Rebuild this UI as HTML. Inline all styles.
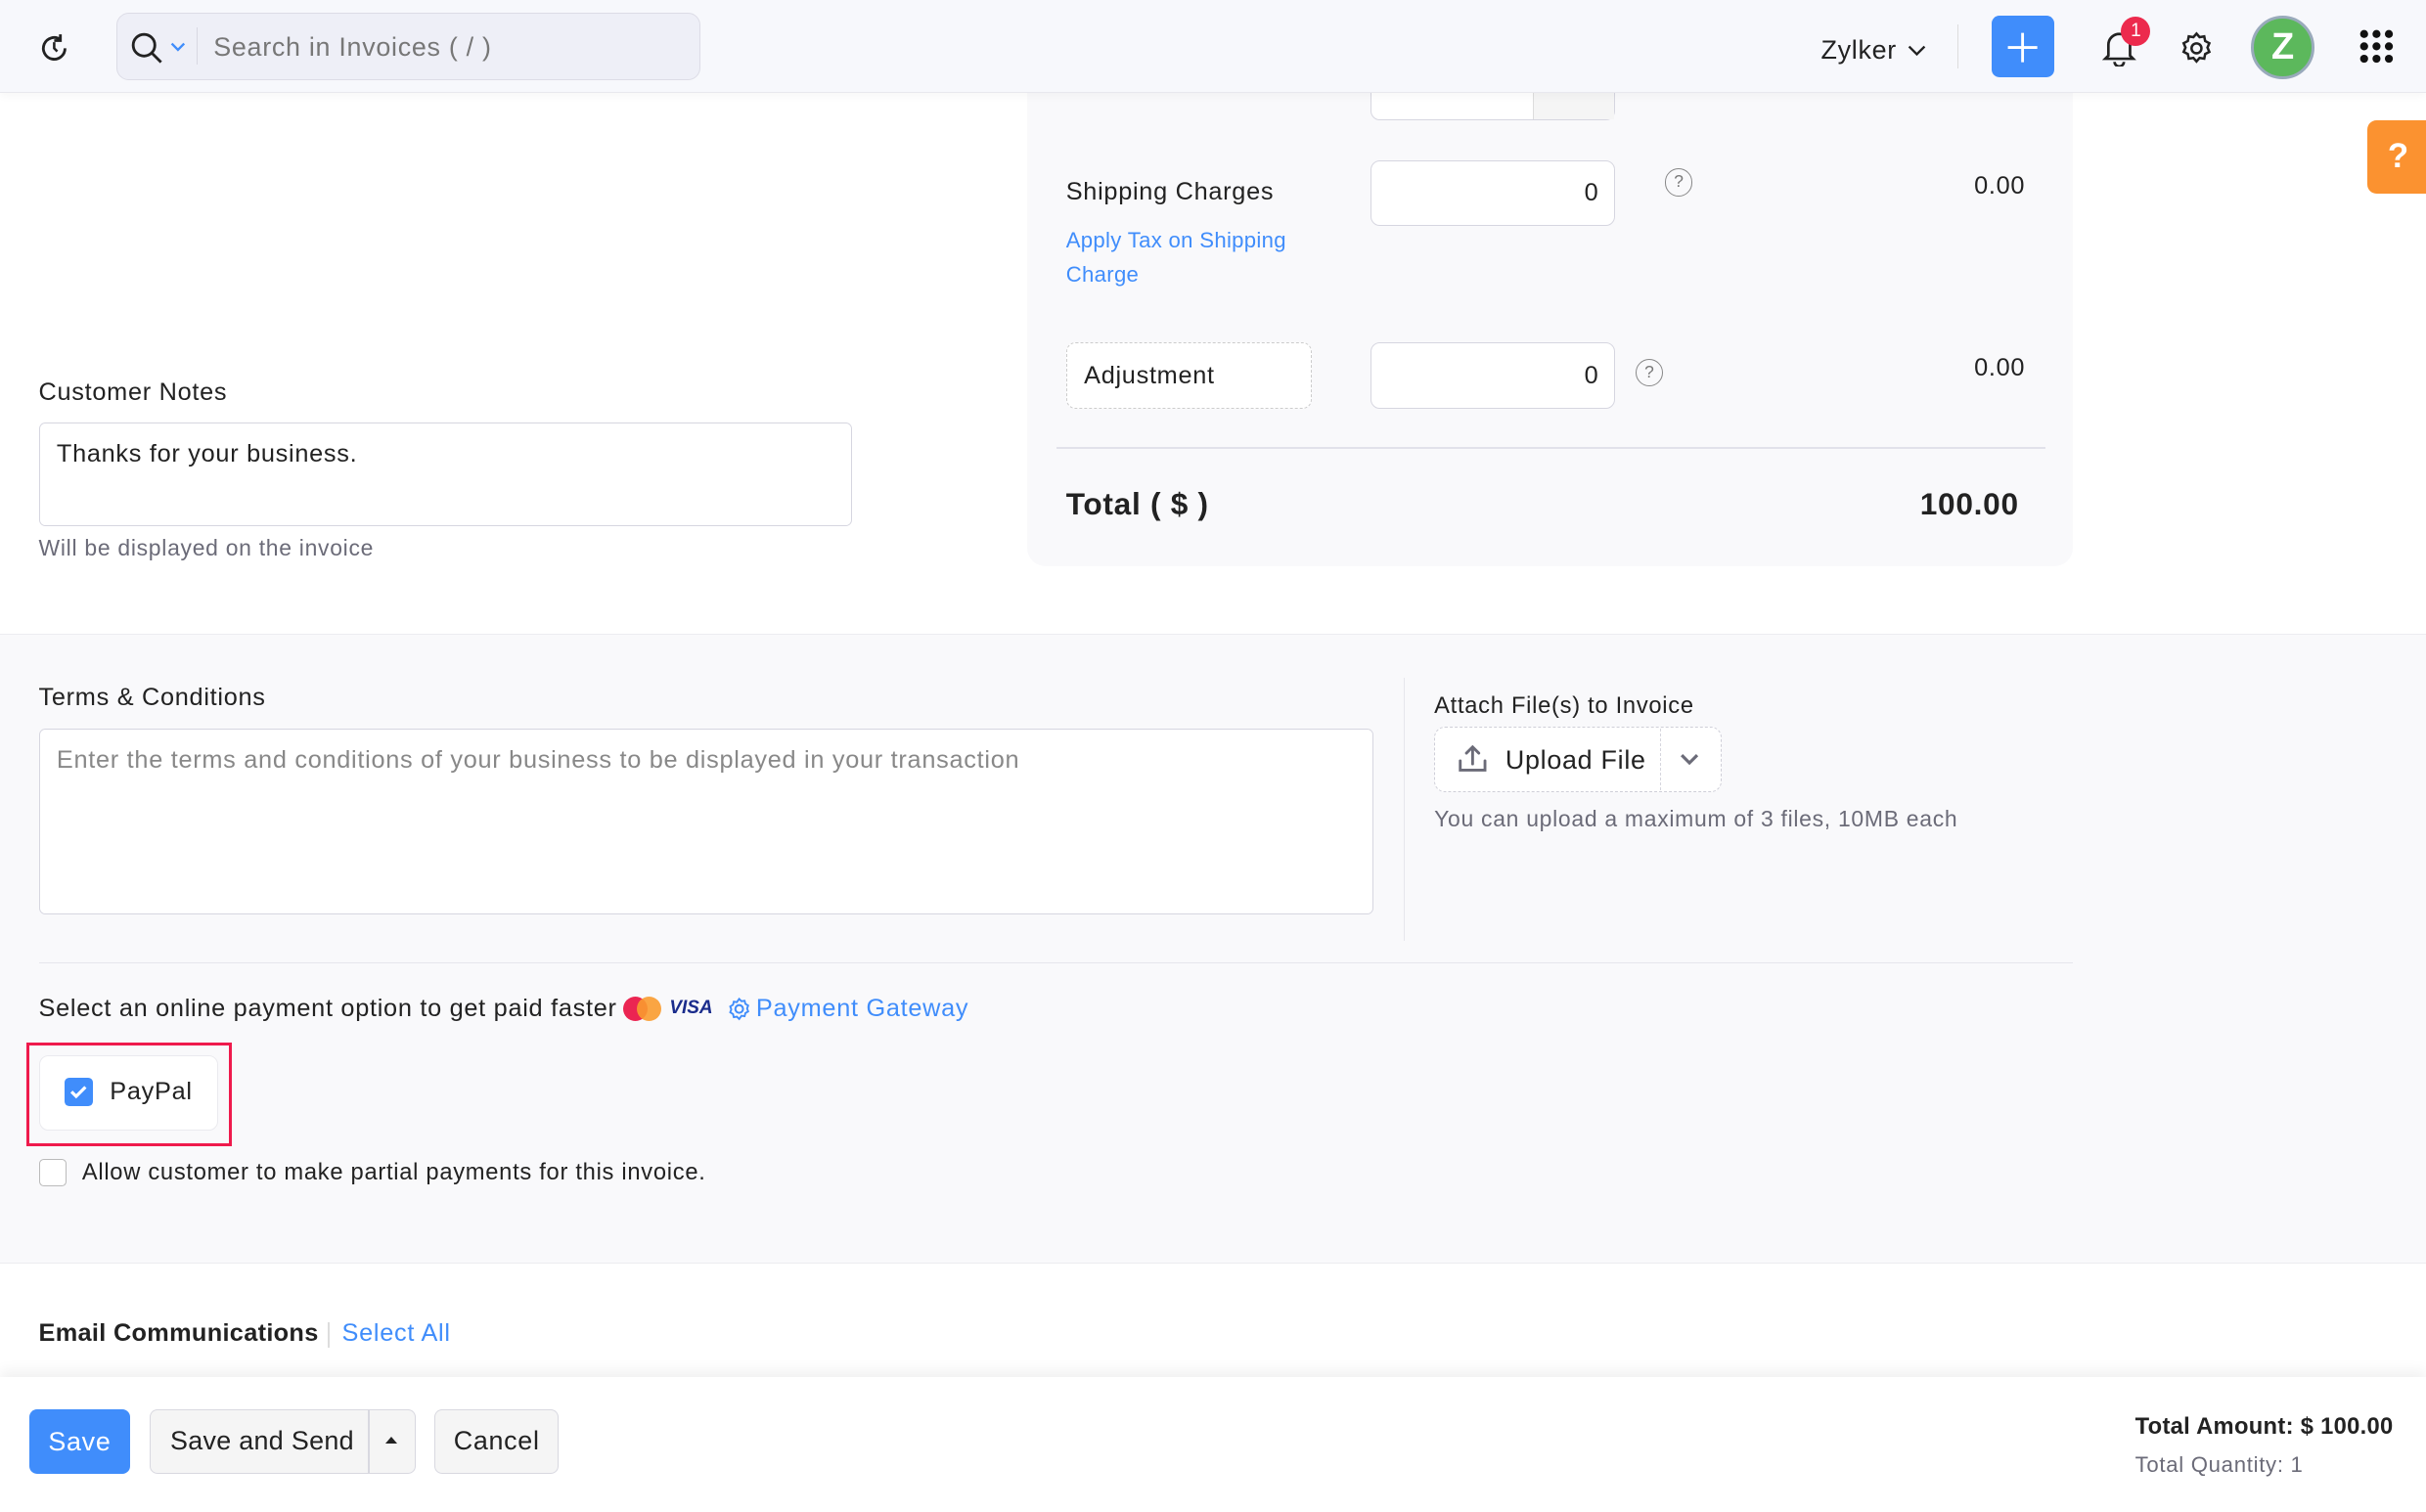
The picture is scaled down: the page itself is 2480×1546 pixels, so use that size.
<!DOCTYPE html>
<html><head><meta charset="utf-8"><style>
*{box-sizing:border-box;margin:0;padding:0}
html,body{width:2480px;height:1546px;overflow:hidden;background:#fff}
#r{zoom:1.5816;width:1568px;height:977px;position:relative;font-family:"Liberation Sans",sans-serif;color:#222;font-size:16px;background:#fff;overflow:hidden;letter-spacing:0.45px}
.a{position:absolute;white-space:nowrap}
.inp{position:absolute;background:#fff;border:1px solid #d6d6e0;border-radius:6px}
.blue{color:#408dfb}
.gray{color:#6b6b78}
</style></head><body><div id="r">
<div class="a" style="left:664px;top:60px;width:676px;height:306px;background:#f9f9fb;border-radius:0 0 12px 12px"></div>
<div class="inp" style="left:886px;top:40px;width:158px;height:38px;border-radius:0 0 6px 6px"></div>
<div class="a" style="left:991px;top:41px;width:52px;height:36px;background:#f5f5f5;border-left:1px solid #ddd"></div>
<div class="a" style="left:689px;top:115px">Shipping Charges</div>
<div class="a blue" style="left:689px;top:145px;font-size:14px;line-height:22px;letter-spacing:0.2px">Apply Tax on Shipping<br>Charge</div>
<div class="inp" style="left:886px;top:104px;width:158px;height:42px;text-align:right;padding:11px 10px">0</div>
<div class="a" style="left:1076px;top:109px;width:18px;height:18px;border:1px solid #888;border-radius:50%;font-size:11px;text-align:center;line-height:16px;color:#777;letter-spacing:0">?</div>
<div class="a" style="left:1276px;top:111px">0.00</div>
<div class="a" style="left:689px;top:221px;width:159px;height:43px;border:1px dashed #ccc;border-radius:6px;background:#fff;padding:12px 11px">Adjustment</div>
<div class="inp" style="left:886px;top:221px;width:158px;height:43px;text-align:right;padding:12px 10px">0</div>
<div class="a" style="left:1057px;top:232px;width:18px;height:18px;border:1px solid #888;border-radius:50%;font-size:11px;text-align:center;line-height:16px;color:#777;letter-spacing:0">?</div>
<div class="a" style="left:1276px;top:229px">0.00</div>
<div class="a" style="left:683px;top:289px;width:639px;height:1px;background:#e2e2ea"></div>
<div class="a" style="left:689px;top:314px;font-size:20px;font-weight:bold">Total ( $ )</div>
<div class="a" style="left:1241px;top:314px;font-size:20px;font-weight:bold">100.00</div>

<div class="a" style="left:25px;top:245px">Customer Notes</div>
<div class="inp" style="left:25px;top:273px;width:526px;height:67px;padding:11px 11px;border-radius:4px">Thanks for your business.</div>
<div class="a gray" style="left:25px;top:346px;font-size:14.5px">Will be displayed on the invoice</div>

<div class="a" style="left:0;top:410px;width:1568px;height:407px;background:#f9f9fb;border-top:1px solid #ececf0;border-bottom:1px solid #ececf0"></div>
<div class="a" style="left:25px;top:442px">Terms &amp; Conditions</div>
<div class="inp" style="left:25px;top:471px;width:863px;height:120px;padding:11px 11px;color:#888;border-radius:4px">Enter the terms and conditions of your business to be displayed in your transaction</div>
<div class="a" style="left:907px;top:438px;width:1px;height:170px;background:#e6e6ec"></div>
<div class="a" style="left:927px;top:448px;font-size:15px">Attach File(s) to Invoice</div>
<div class="a" style="left:927px;top:470px;width:186px;height:42px;border:1px dashed #cfcfd8;border-radius:7px;background:#fff"></div>
<div class="a" style="left:1073px;top:471px;width:1px;height:40px;border-left:1px dashed #d6d6de"></div>
<svg class="a" style="left:941px;top:480px" width="22" height="22" viewBox="0 0 22 22"><path d="M3 12v6h16v-6M11 3v11M7 7l4-4 4 4" fill="none" stroke="#6b6b78" stroke-width="1.8" stroke-linecap="round"/></svg>
<div class="a" style="left:973px;top:482px;font-size:17px">Upload File</div>
<svg class="a" style="left:1085px;top:486px" width="14" height="10" viewBox="0 0 14 10"><path d="M2 2l5 5 5-5" fill="none" stroke="#6b6b78" stroke-width="2"/></svg>
<div class="a gray" style="left:927px;top:521px;font-size:14.5px">You can upload a maximum of 3 files, 10MB each</div>
<div class="a" style="left:25px;top:622px;width:1315px;height:1px;background:#e6e6ec"></div>
<div class="a" style="left:25px;top:643px;display:flex;align-items:center">
<span>Select an online payment option to get paid faster</span>
<span style="position:relative;display:inline-block;width:26px;height:16px;margin-left:4px"><span style="position:absolute;left:0;top:0;width:16px;height:16px;border-radius:50%;background:#eb2552"></span><span style="position:absolute;left:9px;top:0;width:16px;height:16px;border-radius:50%;background:#f99b2f;opacity:.9"></span></span>
<span style="font-size:12px;font-weight:bold;font-style:italic;color:#1a2c8c;margin-left:4px;letter-spacing:0">VISA</span>
<svg style="margin-left:9px" width="16" height="16" viewBox="0 0 16 16"><circle cx="8" cy="8" r="2.5" fill="none" stroke="#408dfb" stroke-width="1.3"/><path d="M8 1.5l1.5 1.5 2-.3.5 2 1.8 1.1-.7 1.9.7 1.9-1.8 1.1-.5 2-2-.3L8 14.5 6.5 13l-2 .3-.5-2L2.2 10.2 2.9 8.3 2.2 6.4 4 5.3l.5-2 2 .3z" fill="none" stroke="#408dfb" stroke-width="1.2"/></svg>
<span class="blue" style="margin-left:3px">Payment Gateway</span>
</div>
<div class="a" style="left:17px;top:674px;width:133px;height:67px;border:2px solid #ef1a4c"></div>
<div class="a" style="left:25px;top:682px;width:116px;height:49px;background:#fff;border:1px solid #eaeaef;border-radius:6px"></div>
<div class="a" style="left:42px;top:697px;width:18px;height:18px;border-radius:3px;background:#408dfb"></div>
<svg class="a" style="left:42px;top:697px" width="18" height="18"><path d="M4.5 9l3 3 6-6" fill="none" stroke="#fff" stroke-width="2"/></svg>
<div class="a" style="left:71px;top:697px">PayPal</div>
<div class="a" style="left:25px;top:749px;width:18px;height:18px;border:1px solid #bbb;border-radius:3px;background:#fff"></div>
<div class="a" style="left:53px;top:750px;font-size:15px">Allow customer to make partial payments for this invoice.</div>

<div class="a" style="left:25px;top:853px;font-weight:bold;font-size:16px;letter-spacing:0.2px">Email Communications</div>
<div class="a" style="left:212px;top:855px;width:1px;height:16px;background:#ddd"></div>
<div class="a blue" style="left:221px;top:853px">Select All</div>

<div class="a" style="left:0;top:890px;width:1568px;height:87px;background:#fff;box-shadow:0 -4px 8px rgba(0,0,0,.06)"></div>
<div class="a" style="left:19px;top:911px;width:65px;height:42px;background:#408dfb;border-radius:5px;color:#fff;text-align:center;line-height:42px;font-size:17px">Save</div>
<div class="a" style="left:97px;top:911px;width:172px;height:42px;background:#f5f5f5;border:1px solid #d8d8e0;border-radius:5px"></div>
<div class="a" style="left:238px;top:912px;width:1px;height:40px;background:#d8d8e0"></div>
<div class="a" style="left:110px;top:922px;font-size:17px;letter-spacing:0.2px">Save and Send</div>
<div class="a" style="left:249px;top:929px;width:0;height:0;border-left:4px solid transparent;border-right:4px solid transparent;border-bottom:5px solid #222"></div>
<div class="a" style="left:281px;top:911px;width:80px;height:42px;background:#f5f5f5;border:1px solid #d8d8e0;border-radius:5px;text-align:center;line-height:40px;font-size:17px">Cancel</div>
<div class="a" style="left:1380px;top:914px;font-weight:bold;font-size:15px;letter-spacing:0.2px">Total Amount: $ 100.00</div>
<div class="a gray" style="left:1380px;top:939px;font-size:14px">Total Quantity: 1</div>

<div class="a" style="left:0;top:0;width:1568px;height:60px;background:#f7f8fc;border-bottom:1px solid #e8e8ee;box-shadow:0 2px 6px rgba(0,0,0,.04)"></div>
<div class="a" style="left:689px;top:44px;font-size:16px;clip-path:inset(0 0 60% 0);z-index:0;display:none">Discount</div>
<svg class="a" style="left:24px;top:20px" width="22" height="22" viewBox="0 0 22 22"><path d="M18 11a7 7 0 1 1-3-5.7M15 2v4h-4" fill="none" stroke="#222" stroke-width="1.8"/><path d="M11 7v4l2 2" fill="none" stroke="#222" stroke-width="1.6"/></svg>
<div class="a" style="left:75px;top:8px;width:378px;height:44px;background:#eeeff7;border:1px solid #dcdce6;border-radius:8px"></div>
<svg class="a" style="left:84px;top:20px" width="22" height="22" viewBox="0 0 22 22"><circle cx="9" cy="9" r="7" fill="none" stroke="#222" stroke-width="1.8"/><path d="M14 14l6 6" stroke="#222" stroke-width="1.8"/></svg>
<svg class="a" style="left:110px;top:27px" width="10" height="7"><path d="M1 1l4 4 4-4" fill="none" stroke="#408dfb" stroke-width="1.5"/></svg>
<div class="a" style="left:127px;top:18px;width:1px;height:24px;background:#d8d8e2"></div>
<div class="a" style="left:138px;top:21px;color:#777;font-size:17px">Search in Invoices ( / )</div>
<div class="a" style="left:1177px;top:23px;font-size:17px">Zylker</div>
<svg class="a" style="left:1233px;top:29px" width="12" height="8"><path d="M1 1l5 5 5-5" fill="none" stroke="#222" stroke-width="1.5"/></svg>
<div class="a" style="left:1265px;top:16px;width:1px;height:28px;background:#ddd"></div>
<div class="a" style="left:1287px;top:10px;width:41px;height:40px;background:#408dfb;border-radius:5px"></div>
<svg class="a" style="left:1297px;top:20px" width="21" height="21"><path d="M10.5 1v19M1 10.5h19" stroke="#fff" stroke-width="1.8"/></svg>
<svg class="a" style="left:1359px;top:19px" width="22" height="24" viewBox="0 0 22 24"><path d="M4 17V10a7 7 0 0 1 14 0v7l2 2H2z" fill="none" stroke="#222" stroke-width="1.7"/><path d="M8 21a3 3 0 0 0 6 0" fill="none" stroke="#222" stroke-width="1.7"/></svg>
<div class="a" style="left:1371px;top:11px;width:19px;height:19px;border-radius:50%;background:#ec2a4d;color:#fff;font-size:12px;text-align:center;line-height:19px;letter-spacing:0">1</div>
<svg class="a" style="left:1409px;top:20px" width="22" height="22" viewBox="0 0 22 22"><circle cx="11" cy="11" r="3.2" fill="none" stroke="#222" stroke-width="1.6"/><path d="M11 1.5l2 2.3 3-.5.6 3 2.7 1.4-1.2 2.8 1.2 2.8-2.7 1.4-.6 3-3-.5-2 2.3-2-2.3-3 .5-.6-3-2.7-1.4 1.2-2.8-1.2-2.8 2.7-1.4.6-3 3 .5z" fill="none" stroke="#222" stroke-width="1.6"/></svg>
<div class="a" style="left:1455px;top:10px;width:41px;height:41px;border-radius:50%;background:#5cb85c;border:2px solid #9ab;color:#fff;font-weight:bold;font-size:24px;text-align:center;line-height:37px;letter-spacing:0">Z</div>
<svg class="a" style="left:1525px;top:19px" width="22" height="22"><g fill="#111"><circle cx="3" cy="3" r="2.6"/><circle cx="11" cy="3" r="2.6"/><circle cx="19" cy="3" r="2.6"/><circle cx="3" cy="11" r="2.6"/><circle cx="11" cy="11" r="2.6"/><circle cx="19" cy="11" r="2.6"/><circle cx="3" cy="19" r="2.6"/><circle cx="11" cy="19" r="2.6"/><circle cx="19" cy="19" r="2.6"/></g></svg>
<div class="a" style="left:1530px;top:78px;width:40px;height:47px;background:#fb9230;border-radius:6px 0 0 6px;color:#fff;font-weight:bold;font-size:22px;text-align:center;line-height:47px;letter-spacing:0">?</div>
</div></body></html>
